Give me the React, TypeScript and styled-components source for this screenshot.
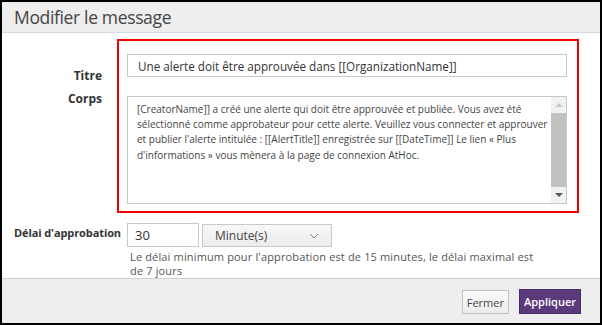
import { createGlobalStyle } from "styled-components"
import styled from "styled-components"

const GlobalStyle = createGlobalStyle`
  html, body {
    margin: 0;
    padding: 0;
    background: #ffffff;
  }
  * {
    box-sizing: border-box;
  }
`

const FONT = `"Open Sans", "Noto Sans", "Liberation Sans", sans-serif`

const Dialog = styled.div`
  width: 602px;
  height: 325px;
  border: 2px solid #000;
  display: flex;
  flex-direction: column;
  background: #fff;
  font-family: ${FONT};
  color: #333;
  overflow: hidden;
`

const Header = styled.div`
  height: 31px;
  flex: 0 0 auto;
  background: #eeeeee;
  border-bottom: 1px solid #d8d8d8;
  display: flex;
  align-items: center;
  padding-left: 12px;
`

const Title = styled.h1`
  margin: 0;
  font-size: 17.5px;
  font-weight: 400;
  color: #444;
  letter-spacing: -0.35px;
`

const Body = styled.div`
  flex: 1 1 auto;
  display: flex;
  flex-direction: column;
  padding-top: 6px;
`

const MessageRow = styled.div`
  display: grid;
  grid-template-columns: 115px 462px;
`

const LabelColumn = styled.div`
  display: flex;
  flex-direction: column;
  align-items: flex-end;
  padding-right: 15px;
  padding-top: 30px;
  gap: 9px;
`

const FieldLabel = styled.label`
  font-size: 12px;
  font-weight: 700;
  color: #333;
  line-height: 14px;
`

const Highlight = styled.div`
  border: 2px solid #f00000;
  height: 174px;
  padding: 13px 10px 0 8px;
  display: flex;
  flex-direction: column;
  gap: 19px;
`

const TitleInput = styled.div`
  height: 23px;
  border: 1px solid #c8c8c8;
  padding-left: 10px;
  font-size: 11.7px;
  color: #333;
  display: flex;
  align-items: center;
  white-space: nowrap;
`

const TextArea = styled.div`
  height: 108px;
  border: 1px solid #c8c8c8;
  display: flex;
`

const TextContent = styled.div`
  flex: 1 1 auto;
  padding: 5px 0 0 9px;
  font-size: 10px;
  line-height: 15.2px;
  color: #444;
  overflow: hidden;
  white-space: nowrap;
`

const ScrollBar = styled.div`
  width: 15px;
  flex: 0 0 auto;
  background: #f1f1f1;
  display: flex;
  flex-direction: column;
  align-items: center;
`

const Arrow = styled.div<{ $dir: "up" | "down"; $color: string }>`
  height: 16px;
  width: 100%;
  display: flex;
  align-items: center;
  justify-content: center;
  &::after {
    content: "";
    width: 0;
    height: 0;
    border-left: 4px solid transparent;
    border-right: 4px solid transparent;
    ${(p) =>
      p.$dir === "up"
        ? `border-bottom: 4px solid ${p.$color};`
        : `border-top: 4px solid ${p.$color};`}
  }
`

const Thumb = styled.div`
  width: 100%;
  height: 75px;
  background: #c1c1c1;
`

const DelayRow = styled.div`
  display: grid;
  grid-template-columns: 113px auto;
  margin-top: 10px;
  padding-left: 12px;
`

const DelayLabel = styled.label`
  font-size: 11px;
  font-weight: 700;
  color: #333;
  padding-top: 2px;
  white-space: nowrap;
  letter-spacing: -0.1px;
`

const DelayControls = styled.div`
  display: flex;
  flex-direction: column;
`

const InputLine = styled.div`
  display: flex;
  gap: 3px;
  align-items: flex-start;
`

const NumberBox = styled.div`
  width: 72px;
  height: 24px;
  border: 1px solid #c8c8c8;
  padding-left: 7px;
  display: flex;
  align-items: center;
  font-size: 13px;
  color: #333;
`

const Select = styled.div`
  width: 130px;
  height: 23px;
  margin-top: 1px;
  border: 1px solid #c8c8c8;
  background: linear-gradient(#f7f7f7, #ececec);
  display: flex;
  align-items: center;
  justify-content: space-between;
  padding: 0 12px 0 12px;
  font-size: 12px;
  color: #444;
`

const HelpText = styled.p`
  margin: 3px 0 0 3px;
  font-size: 11px;
  line-height: 14px;
  color: #555;
  width: 405px;
  letter-spacing: 0.15px;
`

const Footer = styled.div`
  flex: 0 0 45px;
  background: #eeeeee;
  border-top: 1px solid #cfcfcf;
  display: flex;
  justify-content: flex-end;
  align-items: flex-start;
  padding: 11px 19px 0 0;
  gap: 10px;
`

const Button = styled.button<{ $primary?: boolean }>`
  font-family: ${FONT};
  font-size: 11px;
  height: 24px;
  padding: 0 4px;
  cursor: pointer;
  border-radius: 0;
  ${(p) =>
    p.$primary
      ? `
    background: #5b3a7c;
    border: 1px solid #4a2d68;
    color: #fff;
    font-weight: 600;
    margin-top: -1px;
    height: 25px;
    padding: 0 4px;
  `
      : `
    background: linear-gradient(#fafafa, #ebebeb);
    border: 1px solid #c2c2c2;
    color: #444;
  `}
`

const Chevron = () => (
  <svg width="10" height="6" viewBox="0 0 10 6">
    <path d="M1 1 L5 5 L9 1" fill="none" stroke="#888" strokeWidth="1" />
  </svg>
)

const bodyLines = [
  "[CreatorName]] a créé une alerte qui doit être approuvée et publiée. Vous avez été",
  "sélectionné comme approbateur pour cette alerte. Veuillez vous connecter et approuver",
  "et publier l'alerte intitulée : [[AlertTitle]] enregistrée sur [[DateTime]] Le lien « Plus",
  "d'informations » vous mènera à la page de connexion AtHoc.",
]

export default function App() {
  return (
    <>
      <GlobalStyle />
      <Dialog>
        <Header>
          <Title>Modifier le message</Title>
        </Header>
        <Body>
          <MessageRow>
            <LabelColumn>
              <FieldLabel>Titre</FieldLabel>
              <FieldLabel>Corps</FieldLabel>
            </LabelColumn>
            <Highlight>
              <TitleInput>Une alerte doit être approuvée dans [[OrganizationName]]</TitleInput>
              <TextArea>
                <TextContent>
                  {bodyLines.map((line) => (
                    <div key={line}>{line}</div>
                  ))}
                </TextContent>
                <ScrollBar>
                  <Arrow $dir="up" $color="#c8c8c8" />
                  <Thumb />
                  <Arrow $dir="down" $color="#555" />
                </ScrollBar>
              </TextArea>
            </Highlight>
          </MessageRow>
          <DelayRow>
            <DelayLabel>Délai d'approbation</DelayLabel>
            <DelayControls>
              <InputLine>
                <NumberBox>30</NumberBox>
                <Select>
                  <span>Minute(s)</span>
                  <Chevron />
                </Select>
              </InputLine>
              <HelpText>
                Le délai minimum pour l'approbation est de 15 minutes, le délai maximal est de 7 jours
              </HelpText>
            </DelayControls>
          </DelayRow>
        </Body>
        <Footer>
          <Button>Fermer</Button>
          <Button $primary>Appliquer</Button>
        </Footer>
      </Dialog>
    </>
  )
}
